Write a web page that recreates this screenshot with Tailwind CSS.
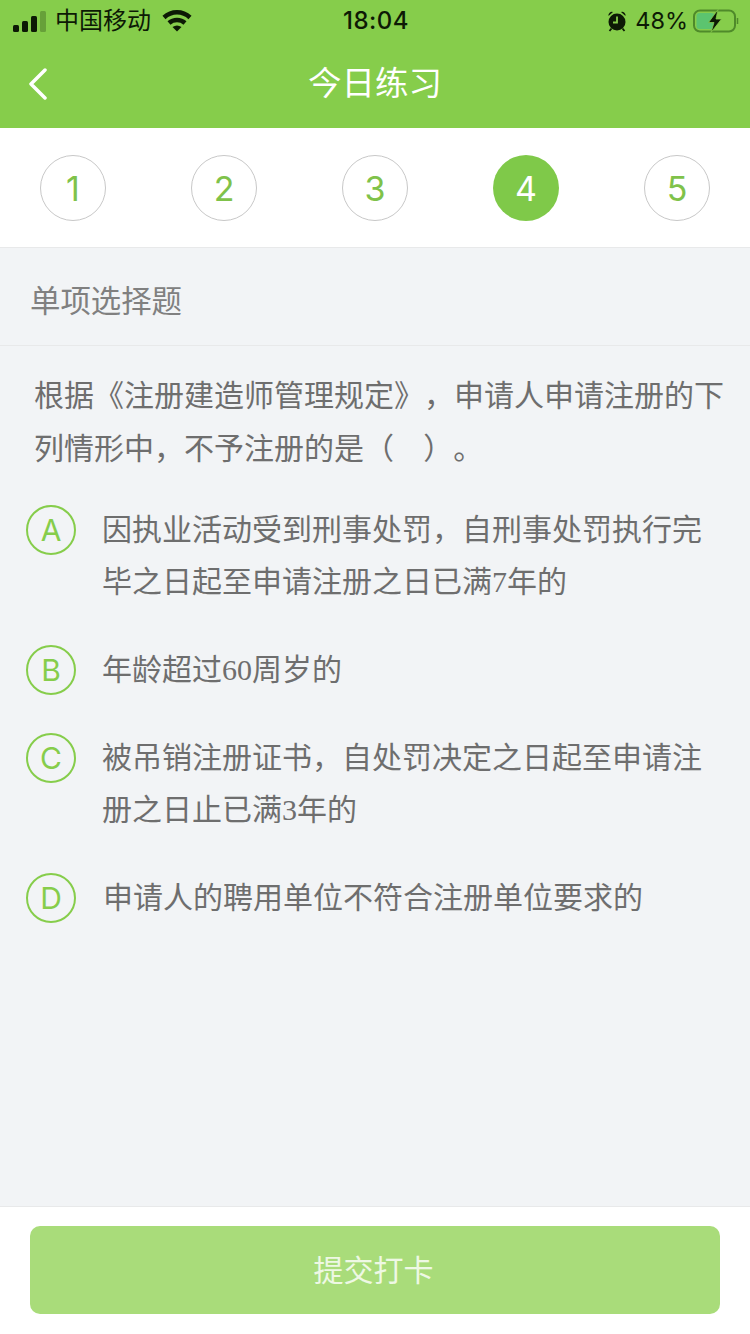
<!DOCTYPE html>
<html lang="zh-CN">
<head>
    <meta charset="UTF-8">
    <meta name="viewport" content="width=device-width, initial-scale=1.0">
    <title>今日练习</title>
    <script src="https://cdn.jsdelivr.net/npm/@tailwindcss/browser@4"></script>
</head>
<body class="w-[750px] h-[1334px] flex flex-col bg-[#f2f4f6] overflow-hidden [text-spacing-trim:space-all] font-['Inter','Noto_Sans_CJK_SC',sans-serif]">
<!-- Header -->
<header class="h-[128px] shrink-0 bg-[#86cd4b]">
    <div class="h-[40px] pt-[2px] pl-[13px] pr-[11px] flex items-center justify-between text-[#0d1a05]">
        <div class="w-[250px] flex items-center">
            <svg width="34" height="21" viewBox="0 0 34 21" class="mr-[8px]">
                <rect x="0" y="14" width="6" height="7" rx="1.5" fill="#0d1a05"/>
                <rect x="9" y="10" width="6" height="11" rx="1.5" fill="#0d1a05"/>
                <rect x="18" y="5" width="6" height="16" rx="1.5" fill="#0d1a05"/>
                <rect x="27" y="0" width="6" height="21" rx="1.5" fill="#0d1a05" fill-opacity="0.25"/>
            </svg>
            <span class="text-[24px] leading-none">中国移动</span>
            <svg width="30" height="22" viewBox="0 0 30 22" class="ml-[11px]" fill="none" stroke="#0d1a05" stroke-width="4.5">
                <path d="M2 7.5 C9.5 0.5 20.5 0.5 28 7.5"/>
                <path d="M7 13 C11.5 9 18.5 9 23 13"/>
                <path d="M10.5 17 L15 21.5 L19.5 17 C16.5 15 13.5 15 10.5 17 Z" fill="#0d1a05" stroke="none"/>
            </svg>
        </div>
        <span class="text-[24px] leading-none font-medium tracking-[0.5px]">18:04</span>
        <div class="w-[250px] flex items-center justify-end">
            <svg width="20" height="22" viewBox="0 0 20 22" class="mr-[8px]">
                <circle cx="10" cy="12" r="8.5" fill="#0d1a05"/>
                <path d="M1.5 6 A3.5 3.5 0 0 1 6 2 Z M18.5 6 A3.5 3.5 0 0 0 14 2 Z" fill="#0d1a05"/>
                <path d="M10 6.5 V12.5 H6" fill="none" stroke="#86cd4b" stroke-width="1.8"/>
                <path d="M4.5 18.5 L2.5 21 M15.5 18.5 L17.5 21" stroke="#0d1a05" stroke-width="1.8"/>
            </svg>
            <span class="text-[23.5px] leading-none mr-[5px]">48%</span>
            <svg width="46" height="24" viewBox="0 0 46 24">
                <rect x="1" y="1.5" width="41" height="21" rx="6" fill="none" stroke="#4f8a2a" stroke-width="2"/>
                <rect x="3.5" y="4" width="18" height="16" rx="3" fill="#5cc46f"/>
                <path d="M44.5 9 V15" stroke="#4f8a2a" stroke-width="1.5"/>
                <path d="M25 0.5 L15.5 13.5 H21 L18 23.5 L28.5 10 H23 Z" fill="#0d1a05" stroke="#86cd4b" stroke-width="0.8"/>
            </svg>
        </div>
    </div>
    <div class="h-[88px] relative flex items-center justify-center">
        <svg width="20" height="32" viewBox="0 0 20 32" class="absolute left-[28px] top-[28px]" fill="none" stroke="white" stroke-width="3.5" stroke-linecap="round" stroke-linejoin="round">
            <path d="M17 2 L3 16 L17 30"/>
        </svg>
        <h1 class="text-[33.5px] leading-none text-white">今日练习</h1>
    </div>
</header>

<!-- Question numbers -->
<nav class="h-[120px] shrink-0 bg-white border-b border-[#e8e9ea] px-[40px] pt-[1px] flex items-center justify-between">
    <span class="w-[66px] h-[66px] rounded-full border border-[#c8c8c8] flex items-center justify-center text-[34px] text-[#7fc24a]">1</span>
    <span class="w-[66px] h-[66px] rounded-full border border-[#c8c8c8] flex items-center justify-center text-[34px] text-[#7fc24a]">2</span>
    <span class="w-[66px] h-[66px] rounded-full border border-[#c8c8c8] flex items-center justify-center text-[34px] text-[#7fc24a]">3</span>
    <span class="w-[66px] h-[66px] rounded-full bg-[#7fc949] flex items-center justify-center text-[34px] text-white">4</span>
    <span class="w-[66px] h-[66px] rounded-full border border-[#c8c8c8] flex items-center justify-center text-[34px] text-[#7fc24a]">5</span>
</nav>

<main class="flex-1">
    <div class="h-[98px] pt-[10px] px-[30px] border-b border-[#e8e9ea] flex items-center text-[30.4px] text-[#808080]">单项选择题</div>

    <p class="pt-[23px] pl-[34px] pr-[25px] text-[30px] leading-[53px] text-[#6e6e6e]">根据《注册建造师管理规定》，申请人申请注册的下列情形中，不予注册的是（ &nbsp; <span class="ml-[4px]">）。</span></p>

    <!-- Options -->
    <ul class="pt-[30px] pl-[26px] pr-[40px] flex flex-col gap-[37px] text-[30px] leading-[52px] text-[#6e6e6e]">
        <li class="flex items-start">
            <span class="w-[50px] h-[50px] shrink-0 mr-[26px] rounded-full border-2 border-[#86cd4b] flex items-center justify-center text-[30px] leading-none text-[#86cd4b]">A</span>
            <span class="-mt-[2px]">因执业活动受到刑事处罚，自刑事处罚执行完毕之日起至申请注册之日已满<span class="font-['Liberation_Serif']">7</span>年的</span>
        </li>
        <li class="flex items-start">
            <span class="w-[50px] h-[50px] shrink-0 mr-[26px] rounded-full border-2 border-[#86cd4b] flex items-center justify-center text-[30px] leading-none text-[#86cd4b]">B</span>
            <span class="-mt-[2px]">年龄超过<span class="font-['Liberation_Serif']">60</span>周岁的</span>
        </li>
        <li class="flex items-start">
            <span class="w-[50px] h-[50px] shrink-0 mr-[26px] rounded-full border-2 border-[#86cd4b] flex items-center justify-center text-[30px] leading-none text-[#86cd4b]">C</span>
            <span class="-mt-[2px]">被吊销注册证书，自处罚决定之日起至申请注册之日止已满<span class="font-['Liberation_Serif']">3</span>年的</span>
        </li>
        <li class="flex items-start">
            <span class="w-[50px] h-[50px] shrink-0 mr-[27px] rounded-full border-2 border-[#86cd4b] flex items-center justify-center text-[30px] leading-none text-[#86cd4b]">D</span>
            <span class="-mt-[2px]">申请人的聘用单位不符合注册单位要求的</span>
        </li>
    </ul>
</main>

<!-- Submit -->
<footer class="h-[128px] shrink-0 bg-white border-t border-[#e8e9ea] px-[30px] pt-[19px]">
    <button class="w-full h-[88px] pr-[3px] rounded-[10px] bg-[#a9dc7a] text-[30px] text-white/80">提交打卡</button>
</footer>
</body>
</html>
